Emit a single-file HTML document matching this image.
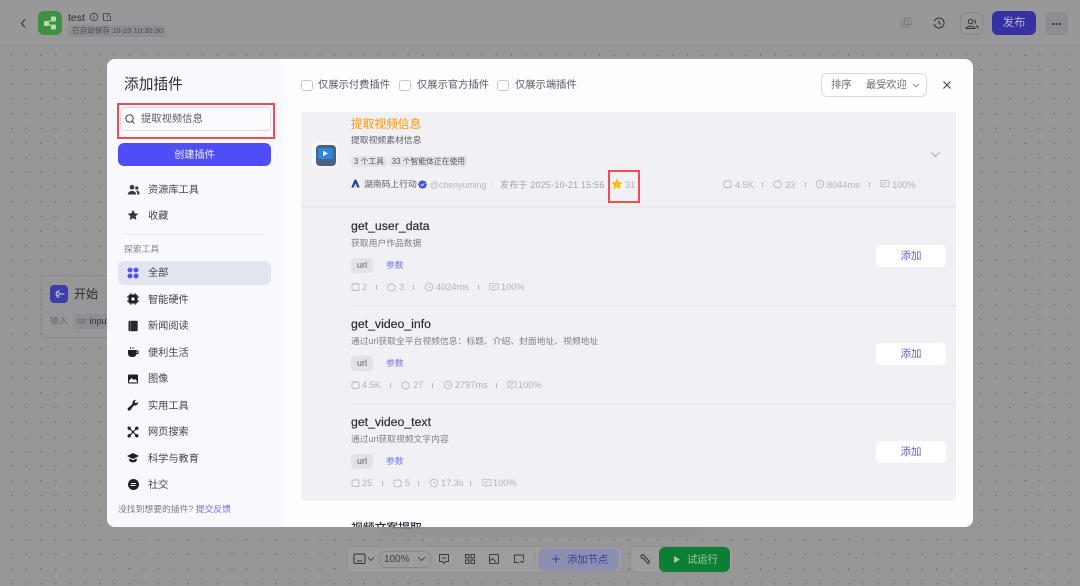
<!DOCTYPE html>
<html><head><meta charset="utf-8">
<style>
*{box-sizing:border-box;margin:0;padding:0}
html,body{width:1080px;height:586px;overflow:hidden}
body{position:relative;background-color:#979798;background-image:radial-gradient(#737375 0.7px,transparent 0.9px);background-size:14.7px 14.7px;background-position:4.35px 3.55px;font-family:"Liberation Sans","Noto Sans CJK SC",sans-serif;color:#33353f}
.a{position:absolute;white-space:nowrap}
svg{position:absolute;display:block}
.t{font-size:10.3px;line-height:14px}
.nav{font-size:10.2px;line-height:16px;color:#44464f;left:148px}
.g{color:#b2b3b9;font-size:9.2px;line-height:12px}
.name{left:351px;font-size:12.3px;line-height:16px;color:#26272e;font-weight:500;-webkit-text-stroke:.15px #26272e}
.desc{left:351px;font-size:8.8px;line-height:13px;color:#7d7f89}
.url{left:351px;width:22px;height:15px;border-radius:4px;background:#e2e2e7;font-size:9px;line-height:15px;text-align:center;color:#5f616b}
.par{left:386px;font-size:8.8px;line-height:14px;color:#7473ee}
.add{left:876px;width:70px;height:22px;border-radius:5px;background:#fff;color:#5f5ee8;font-size:10.5px;line-height:23px;text-align:center}
.sep{width:1px;height:5px;background:#b6b7bc}
</style></head><body>

<!-- header -->
<div class="a" style="left:0;top:0;width:1080px;height:46px;background:#98989a;border-bottom:1px solid #8e8e90"></div>
<svg style="left:19px;top:18px" width="9" height="11" viewBox="0 0 9 11"><path d="M6 1.5 2.5 5.5 6 9.5" fill="none" stroke="#2e2e33" stroke-width="1"/></svg>
<div class="a" style="left:38px;top:11px;width:24px;height:24px;border-radius:6px;background:#3f9141"></div>
<svg style="left:38px;top:11px" width="24" height="24" viewBox="0 0 24 24"><path d="M9 12 15 8M9 12 15 16" stroke="#a9cfa9" stroke-width="1.3"/><rect x="6" y="10" width="5" height="5" rx="1" fill="#b8d8b8"/><rect x="13" y="5.5" width="5" height="5" rx="1" fill="#b8d8b8"/><rect x="13" y="13.5" width="5" height="5" rx="1" fill="#b8d8b8"/></svg>
<div class="a" style="left:68px;top:11px;font-size:10.5px;line-height:14px;color:#2f2f35;font-weight:500">test</div>
<svg style="left:89px;top:12px" width="10" height="10" viewBox="0 0 10 10"><circle cx="5" cy="5" r="3.8" fill="none" stroke="#3c3c42" stroke-width=".8"/><path d="M5 4.4V7.2M5 2.8V3.6" stroke="#3c3c42" stroke-width=".8"/></svg>
<svg style="left:102px;top:12px" width="10" height="10" viewBox="0 0 10 10"><path d="M7 1.6H1.6V8.6H8.4V4M4.6 5.4 8.6 1.2" fill="none" stroke="#3c3c42" stroke-width=".8"/></svg>
<div class="a" style="left:68px;top:25px;width:98px;height:12px;border-radius:3px;background:#8d8d92;font-size:7.6px;line-height:12px;color:#4a4a50;padding-left:4px">已自动保存 10-23 10:30:30</div>

<svg style="left:901px;top:17px" width="11" height="11" viewBox="0 0 11 11"><rect x="1" y="3.5" width="6.5" height="6.5" rx="1" fill="none" stroke="#7c7c80"/><rect x="3.5" y="1" width="6.5" height="6.5" rx="1" fill="none" stroke="#7c7c80"/></svg>
<svg style="left:933px;top:17px" width="12" height="12" viewBox="0 0 12 12"><path d="M1.5 4A5 5 0 1 1 1.2 7M6 3.2V6.2L8 7.4" fill="none" stroke="#2f2f33" stroke-width="1"/></svg>
<div class="a" style="left:960px;top:12px;width:23px;height:23px;border-radius:6px;border:1px solid #88888c"></div>
<svg style="left:965px;top:18px" width="14" height="12" viewBox="0 0 14 12"><circle cx="5.5" cy="3.5" r="2.2" fill="none" stroke="#2f2f33"/><path d="M1 10.5C1 7.5 10 7.5 10 10.5ZM9 1.8A2 2 0 0 1 9.6 5.4M11 7.6C12.4 8 13 9 13 10.5" fill="none" stroke="#2f2f33"/></svg>
<div class="a" style="left:992px;top:11px;width:44px;height:24px;border-radius:6px;background:#3730a0;color:#b4b3d8;font-size:11.5px;line-height:25px;text-align:center">发布</div>
<div class="a" style="left:1045px;top:12px;width:23px;height:23px;border-radius:6px;background:#8c8c91"></div>
<div class="a" style="left:1052px;top:23px;width:2px;height:1.5px;background:#38383c;box-shadow:3.5px 0 #38383c,7px 0 #38383c"></div>

<!-- start node -->
<div class="a" style="left:41px;top:275px;width:90px;height:63px;border-radius:7px;background:#979799;border:1px solid #8a8a8d"></div>
<div class="a" style="left:50px;top:285px;width:18px;height:18px;border-radius:4px;background:#3d3fa6"></div>
<svg style="left:50px;top:285px" width="18" height="18" viewBox="0 0 18 18"><path d="M9.5 5.6A3.4 3.4 0 1 0 9.5 12.4" fill="none" stroke="#b9b9dd" stroke-width="1.1"/><circle cx="8" cy="9" r="1.5" fill="none" stroke="#b9b9dd"/><path d="M9.5 9H14.5" stroke="#b9b9dd" stroke-width="1.2"/></svg>
<div class="a" style="left:74px;top:286px;font-size:12px;line-height:16px;color:#2a2a2e">开始</div>
<div class="a" style="left:50px;top:315px;font-size:9px;line-height:13px;color:#6a6a6e">输入</div>
<div class="a" style="left:74px;top:314px;width:40px;height:15px;background:#8f8f93;border-radius:3px;font-size:9px;line-height:15px;padding-left:3px;color:#2d2d30"><span style="color:#68686c">str</span> input</div>

<!-- bottom toolbar -->
<div class="a" style="left:379px;top:520px;width:323px;height:17px;border-radius:0 0 8px 8px;background:#949497"></div>
<div class="a" style="left:392px;top:519px;font-size:9.5px;line-height:14px;color:#5f5f63">数据库</div>
<div class="a" style="left:347px;top:546px;width:276px;height:27px;border-radius:7px;background:#9d9da0;border:1px solid #909094"></div>
<svg style="left:353px;top:553px" width="14" height="12" viewBox="0 0 14 12"><rect x="1" y="1" width="11" height="9.5" rx="1.2" fill="none" stroke="#2f2f33" stroke-width="1"/><path d="M4 8H9" stroke="#2f2f33"/></svg>
<svg style="left:367px;top:556px" width="8" height="6" viewBox="0 0 8 6"><path d="M1 1.5 4 4.5 7 1.5" fill="none" stroke="#2f2f33" stroke-width=".8"/></svg>
<div class="a" style="left:379px;top:551px;width:52px;height:17px;border-radius:7px;border:1px solid #88888c;font-size:10px;line-height:15px;padding-left:4px;color:#3e3e44">100%</div>
<svg style="left:417px;top:556px" width="9" height="6" viewBox="0 0 9 6"><path d="M1 1 4.5 4.5 8 1" fill="none" stroke="#3a3a3f" stroke-width=".8"/></svg>
<svg style="left:438px;top:553px" width="12" height="12" viewBox="0 0 12 12"><path d="M1.5 1.5H10.5V8.5H7.5L6 10.5 4.5 8.5H1.5ZM4 5H8" fill="none" stroke="#3a3a3f"/></svg>
<svg style="left:464px;top:553px" width="12" height="12" viewBox="0 0 12 12"><path d="M1.5 1.5H5V5H1.5ZM7 1.5H10.5V5H7ZM1.5 7H5V10.5H1.5ZM7 7H10.5V10.5H7Z" fill="none" stroke="#3a3a3f"/></svg>
<svg style="left:488px;top:553px" width="12" height="12" viewBox="0 0 12 12"><rect x="1.5" y="1.5" width="9" height="9" rx="1" fill="none" stroke="#3a3a3f"/><path d="M1.5 8 4.5 5.5 8 9" fill="none" stroke="#3a3a3f"/></svg>
<svg style="left:513px;top:553px" width="12" height="12" viewBox="0 0 12 12"><path d="M6 9.5H1.5V2H10.5V6.5M7.5 8 9 9.5 11 7.5" fill="none" stroke="#3a3a3f"/></svg>
<div class="a" style="left:534px;top:552px;width:1px;height:13px;background:#8d8d91"></div>
<div class="a" style="left:539px;top:548px;width:80px;height:23px;border-radius:6px;background:#8d8fb0"></div>
<svg style="left:551px;top:554px" width="10" height="10" viewBox="0 0 10 10"><path d="M5 1V9M1 5H9" stroke="#3a3b9c" stroke-width="1"/></svg>
<div class="a" style="left:567px;top:553px;font-size:10.3px;line-height:15px;color:#3a3b9c">添加节点</div>
<div class="a" style="left:630px;top:546px;width:104px;height:27px;border-radius:7px;background:#9d9da0;border:1px solid #909094"></div>
<svg style="left:639px;top:553px" width="12" height="12" viewBox="0 0 12 12"><path d="M2 2.5 4 1.5 6 3.5 10.5 8.5 9 10.5 4.5 5.5 2.5 5Z" fill="none" stroke="#333337" stroke-width="1"/></svg>
<div class="a" style="left:659px;top:547px;width:71px;height:25px;border-radius:6px;background:#0c7f35"></div>
<svg style="left:673px;top:555px" width="8" height="9" viewBox="0 0 8 9"><path d="M1 1 7 4.5 1 8Z" fill="#a5c8ae"/></svg>
<div class="a" style="left:687px;top:553px;font-size:10.3px;line-height:15px;color:#a5c8ae">试运行</div>

<!-- modal -->
<div class="a" style="left:107px;top:59px;width:866px;height:468px;border-radius:8px;background:#fdfdff;overflow:hidden">
  <div class="a" style="left:0;top:0;width:176px;height:468px;background:#f8f8fd"></div>
</div>

<!-- sidebar -->
<div class="a" style="left:124px;top:75px;font-size:14.7px;line-height:21px;color:#2c2d33">添加插件</div>
<div class="a" style="left:120px;top:107px;width:151px;height:24px;border-radius:5px;background:#fbfbfe;border:1px solid #d8d9e3"></div>
<svg style="left:124px;top:113px" width="12" height="12" viewBox="0 0 12 12"><circle cx="5.5" cy="5.5" r="3.7" fill="none" stroke="#3c3d45" stroke-width="1"/><path d="M8.3 8.3 10.5 10.5" stroke="#3c3d45"/></svg>
<div class="a" style="left:141px;top:112px;font-size:10.3px;line-height:16px;color:#585a63">提取视频信息</div>
<div class="a" style="left:117px;top:102.5px;width:158px;height:36px;border:2.5px solid #f44b52"></div>
<div class="a" style="left:118px;top:143px;width:153px;height:23px;border-radius:6px;background:#4f4df5;color:#eeeefe;font-size:10.2px;line-height:25px;text-align:center">创建插件</div>

<svg style="left:127px;top:184px" width="13" height="12" viewBox="0 0 13 12"><circle cx="5" cy="3.2" r="2.3" fill="#333648"/><path d="M.8 10.5C.8 5.8 9.2 5.8 9.2 10.5Z" fill="#333648"/><circle cx="9.8" cy="4" r="1.6" fill="#333648"/><path d="M10 6.5C11.5 6.5 12.6 8 12.6 10.5H10.3C10.3 9 10 7.5 9 7Z" fill="#333648"/></svg>
<div class="a nav" style="top:183px">资源库工具</div>
<svg style="left:127px;top:209px" width="12" height="12" viewBox="0 0 12 12"><path d="M6 .8 7.6 4.2 11.4 4.7 8.6 7.2 9.4 11 6 9.1 2.6 11 3.4 7.2.6 4.7 4.4 4.2Z" fill="#333648"/></svg>
<div class="a nav" style="top:209px">收藏</div>
<div class="a" style="left:124px;top:234px;width:141px;height:1px;background:#eeeef4"></div>
<div class="a" style="left:124px;top:242px;font-size:8.8px;line-height:14px;color:#85868f">探索工具</div>
<div class="a" style="left:118px;top:261px;width:153px;height:23.5px;border-radius:6px;background:#e2e4ef"></div>
<svg style="left:127px;top:267px" width="12" height="12" viewBox="0 0 12 12"><g fill="#4f55f0"><ellipse cx="3" cy="3" rx="2.5" ry="2.4"/><ellipse cx="9" cy="3" rx="2.5" ry="2.4"/><ellipse cx="3" cy="9" rx="2.5" ry="2.4"/><ellipse cx="9" cy="9" rx="2.5" ry="2.4"/></g></svg>
<div class="a nav" style="top:266px">全部</div>
<svg style="left:127px;top:293px" width="12" height="12" viewBox="0 0 12 12"><rect x="1.5" y="1.5" width="9" height="9" rx="1.5" fill="#1f2027"/><path d="M4 0V12M8 0V12M0 4H12M0 8H12" stroke="#1f2027" stroke-width=".9"/><rect x="4.5" y="4.5" width="3" height="3" fill="#f8f8fd"/></svg>
<div class="a nav" style="top:293px">智能硬件</div>
<svg style="left:127px;top:320px" width="12" height="12" viewBox="0 0 12 12"><rect x="1.5" y=".8" width="9.2" height="10.4" rx="1" fill="#272830"/><path d="M3.4 1V11" stroke="#8a8b92" stroke-width=".6"/></svg>
<div class="a nav" style="top:319px">新闻阅读</div>
<svg style="left:127px;top:346px" width="12" height="12" viewBox="0 0 12 12"><path d="M1 4H9.5V7.5A3.5 3.5 0 0 1 6 11H4.5A3.5 3.5 0 0 1 1 7.5Z" fill="#1f2027"/><path d="M9.5 5H11V7.5H9.3" fill="none" stroke="#1f2027"/><path d="M3.5 1V3M6 1V3" stroke="#1f2027" stroke-width=".8"/></svg>
<div class="a nav" style="top:346px">便利生活</div>
<svg style="left:127px;top:373px" width="12" height="12" viewBox="0 0 12 12"><rect x="1" y="1.5" width="10" height="9" rx="1" fill="#1f2027"/><path d="M2 8 4.5 5 6.5 7 8 6 10 8V9.4H2Z" fill="#f8f8fd"/></svg>
<div class="a nav" style="top:372px">图像</div>
<svg style="left:127px;top:399px" width="12" height="12" viewBox="0 0 12 12"><path d="M11 3A3 3 0 0 1 7 6.3L3.4 11A1.5 1.5 0 0 1 1 9L5.6 5A3 3 0 0 1 9 1L7.4 2.8 8.8 4.4Z" fill="#1f2027"/></svg>
<div class="a nav" style="top:399px">实用工具</div>
<svg style="left:127px;top:426px" width="12" height="12" viewBox="0 0 12 12"><path d="M2.5 2.5 9.5 9.5M9.5 2.5 2.5 9.5" stroke="#1f2027" stroke-width="1.2"/><g fill="#1f2027"><circle cx="2.2" cy="2.2" r="1.7"/><circle cx="9.8" cy="2.2" r="1.7"/><circle cx="2.2" cy="9.8" r="1.7"/><circle cx="9.8" cy="9.8" r="1.7"/></g></svg>
<div class="a nav" style="top:425px">网页搜索</div>
<svg style="left:127px;top:452px" width="12" height="12" viewBox="0 0 12 12"><path d="M6 1 12 4 6 7 0 4Z" fill="#1f2027"/><path d="M2.3 6.3V8.6C3.5 11 8.5 11 9.7 8.6V6.3L6 8.2Z" fill="#1f2027"/></svg>
<div class="a nav" style="top:452px">科学与教育</div>
<div class="a" style="left:127.5px;top:478.5px;width:11px;height:11px;border-radius:50%;background:#1f2027"></div>
<div class="a" style="left:130.5px;top:482.5px;width:5px;height:1px;background:#f8f8fd;box-shadow:-.5px 2px #f8f8fd"></div>
<div class="a nav" style="top:478px">社交</div>
<div class="a" style="left:118px;top:502px;font-size:8.8px;line-height:14px;color:#7c7d86">没找到想要的插件? <span style="color:#6f6ef0">提交反馈</span></div>

<!-- filters -->
<div class="a" style="left:301px;top:79.5px;width:11.5px;height:11.5px;border-radius:3px;border:1px solid #c5c6d2;background:#fff"></div>
<div class="a t" style="left:318px;top:79px;color:#585a64">仅展示付费插件</div>
<div class="a" style="left:399px;top:79.5px;width:11.5px;height:11.5px;border-radius:3px;border:1px solid #c5c6d2;background:#fff"></div>
<div class="a t" style="left:417px;top:79px;color:#585a64">仅展示官方插件</div>
<div class="a" style="left:497px;top:79.5px;width:11.5px;height:11.5px;border-radius:3px;border:1px solid #c5c6d2;background:#fff"></div>
<div class="a t" style="left:515px;top:79px;color:#585a64">仅展示端插件</div>

<div class="a" style="left:821px;top:73px;width:106px;height:24px;border-radius:6px;border:1px solid #d9d9e6;background:#fff"></div>
<div class="a t" style="left:831px;top:79px;color:#6a6b75">排序</div>
<div class="a t" style="left:866px;top:79px;font-size:10.2px;color:#6a6b75">最受欢迎</div>
<svg style="left:912px;top:83px" width="8" height="6" viewBox="0 0 8 6"><path d="M1 1 4 4 7 1" fill="none" stroke="#8a8b95" stroke-width=".9"/></svg>
<svg style="left:942px;top:80px" width="10" height="10" viewBox="0 0 10 10"><path d="M1.5 1.5 8.5 8.5M8.5 1.5 1.5 8.5" stroke="#3b3c45" stroke-width="1"/></svg>

<!-- list card -->
<div class="a" style="left:301px;top:112px;width:655px;height:389px;border-radius:0 0 6px 6px;background:#f0f0f5"></div>
<div class="a" style="left:301px;top:206px;width:655px;height:2px;background:#e9e9ee"></div>
<div class="a" style="left:351px;top:305px;width:605px;height:1px;background:#e4e4e9"></div>
<div class="a" style="left:351px;top:403px;width:605px;height:1px;background:#e4e4e9"></div>

<!-- plugin head -->
<div class="a" style="left:312px;top:142px;width:26px;height:26px;border-radius:6px;background:#f8f8fb"></div>
<div class="a" style="left:316px;top:145px;width:20px;height:21px;border-radius:4px;background:#4b6286"></div>
<div class="a" style="left:318px;top:148px;width:15px;height:11px;border-radius:2px;background:#3085dc"></div>
<svg style="left:322px;top:150px" width="7" height="7" viewBox="0 0 7 7"><path d="M1 .8 6 3.5 1 6.2Z" fill="#fff"/></svg>
<div class="a" style="left:351px;top:116px;font-size:11.7px;line-height:18px;color:#f7a530;font-weight:500">提取视频信息</div>
<div class="a desc" style="top:134px;color:#5c5e68">提取视频素材信息</div>
<div class="a" style="left:351px;top:156px;width:36px;height:11px;border-radius:3px;background:#e4e4ea;font-size:7.8px;line-height:11.5px;text-align:center;color:#55565f">3 个工具</div>
<div class="a" style="left:390px;top:156px;width:77px;height:11px;border-radius:3px;background:#e4e4ea;font-size:7.8px;line-height:11.5px;text-align:center;color:#55565f">33 个智能体正在使用</div>
<svg style="left:351px;top:179px" width="9" height="9" viewBox="0 0 9 9"><path d="M.3 8.5 3.6.6H5.4L8.7 8.5H6.4L4.5 4.2 2.6 8.5Z" fill="#1f3f9a"/><path d="M3.6 8.5 4.5 6 5.4 8.5Z" fill="#f0b429"/></svg>
<div class="a" style="left:364px;top:178px;font-size:8.8px;line-height:13px;color:#5e606a">湖南码上行动</div>
<svg style="left:418px;top:179.5px" width="9" height="9" viewBox="0 0 9 9"><path d="M4.5 0 5.8 1 7.5 1 8 2.7 9 4.5 8 6.2 7.5 8 5.8 8 4.5 9 3.2 8 1.5 8 1 6.2 0 4.5 1 2.7 1.5 1 3.2 1Z" fill="#4e55dd"/><path d="M2.8 4.5 4.1 5.7 6.3 3.4" fill="none" stroke="#fff" stroke-width=".8"/></svg>
<div class="a g" style="left:430px;top:179px;font-size:8.8px;color:#b7b8c0">@chenyuming</div>
<div class="a" style="left:492px;top:180px;width:1px;height:8px;background:#e2e2e8"></div>
<div class="a g" style="left:500px;top:179px;font-size:9px;color:#a3a4ac;letter-spacing:.2px">发布于 2025-10-21 15:56</div>
<svg style="left:611px;top:178px" width="12" height="12" viewBox="0 0 12 12"><path d="M6 .5 7.7 4 11.6 4.5 8.8 7.2 9.5 11.2 6 9.3 2.5 11.2 3.2 7.2.4 4.5 4.3 4Z" fill="#f8bd12"/></svg>
<div class="a g" style="left:625px;top:179px">31</div>
<div class="a" style="left:607.5px;top:169.5px;width:32.5px;height:33.5px;border:2.5px solid #f44b52"></div>
<svg style="left:930px;top:151px" width="11" height="8" viewBox="0 0 11 8"><path d="M1.5 1.5 5.5 5.5 9.5 1.5" fill="none" stroke="#a5a6ae" stroke-width="1"/></svg>

<svg style="left:723px;top:179px" width="9" height="10" viewBox="0 0 9 10"><rect x="1" y="2" width="7" height="6.5" rx="1.5" fill="none" stroke="#b8b9bf" stroke-width=".9"/><path d="M3 .8V2M6 .8V2" stroke="#b8b9bf" stroke-width=".9"/></svg>
<div class="a g" style="left:735px;top:179px">4.5K</div><div class="a sep" style="left:762px;top:182px"></div>
<svg style="left:773px;top:180px" width="9" height="9" viewBox="0 0 9 9"><rect x=".8" y="1" width="7.4" height="6.8" rx="3" fill="none" stroke="#b8b9bf" stroke-width=".9"/></svg>
<div class="a g" style="left:785px;top:179px">33</div><div class="a sep" style="left:805px;top:182px"></div>
<svg style="left:815px;top:179px" width="10" height="10" viewBox="0 0 10 10"><circle cx="5" cy="5" r="3.8" fill="none" stroke="#b8b9bf" stroke-width=".9"/><path d="M5 3V5.2L6.4 5.8" fill="none" stroke="#b8b9bf" stroke-width=".8"/></svg>
<div class="a g" style="left:827px;top:179px">8044ms</div><div class="a sep" style="left:869px;top:182px"></div>
<svg style="left:880px;top:179px" width="10" height="10" viewBox="0 0 10 10"><path d="M.8 1.5H9V7.5H5.5L4.5 8.5 3.5 7.5H.8ZM2.8 3.8H6.8M2.8 5.4H5" fill="none" stroke="#b8b9bf" stroke-width=".8"/></svg>
<div class="a g" style="left:892px;top:179px">100%</div>

<!-- tool 1 -->
<div class="a name" style="top:218px">get_user_data</div>
<div class="a desc" style="top:237px">获取用户作品数据</div>
<div class="a url" style="top:258px">url</div><div class="a par" style="top:258px">参数</div>
<div class="a add" style="top:245px">添加</div>
<svg style="left:351px;top:282px" width="9" height="10" viewBox="0 0 9 10"><rect x="1" y="2" width="7" height="6.5" rx="1.5" fill="none" stroke="#b8b9bf" stroke-width=".9"/><path d="M3 .8V2M6 .8V2" stroke="#b8b9bf" stroke-width=".9"/></svg>
<div class="a g" style="left:362px;top:281px">2</div><div class="a sep" style="left:376px;top:285px"></div>
<svg style="left:387px;top:283px" width="9" height="9" viewBox="0 0 9 9"><rect x=".8" y="1" width="7.4" height="6.8" rx="3" fill="none" stroke="#b8b9bf" stroke-width=".9"/></svg>
<div class="a g" style="left:399px;top:281px">3</div><div class="a sep" style="left:413px;top:285px"></div>
<svg style="left:424px;top:282px" width="10" height="10" viewBox="0 0 10 10"><circle cx="5" cy="5" r="3.8" fill="none" stroke="#b8b9bf" stroke-width=".9"/><path d="M5 3V5.2L6.4 5.8" fill="none" stroke="#b8b9bf" stroke-width=".8"/></svg>
<div class="a g" style="left:436px;top:281px">4024ms</div><div class="a sep" style="left:478px;top:285px"></div>
<svg style="left:489px;top:282px" width="10" height="10" viewBox="0 0 10 10"><path d="M.8 1.5H9V7.5H5.5L4.5 8.5 3.5 7.5H.8ZM2.8 3.8H6.8M2.8 5.4H5" fill="none" stroke="#b8b9bf" stroke-width=".8"/></svg>
<div class="a g" style="left:501px;top:281px">100%</div>

<!-- tool 2 -->
<div class="a name" style="top:316px">get_video_info</div>
<div class="a desc" style="top:335px">通过url获取全平台视频信息：标题、介绍、封面地址、视频地址</div>
<div class="a url" style="top:356px">url</div><div class="a par" style="top:356px">参数</div>
<div class="a add" style="top:343px">添加</div>
<svg style="left:351px;top:380px" width="9" height="10" viewBox="0 0 9 10"><rect x="1" y="2" width="7" height="6.5" rx="1.5" fill="none" stroke="#b8b9bf" stroke-width=".9"/><path d="M3 .8V2M6 .8V2" stroke="#b8b9bf" stroke-width=".9"/></svg>
<div class="a g" style="left:362px;top:379px">4.5K</div><div class="a sep" style="left:390px;top:383px"></div>
<svg style="left:401px;top:381px" width="9" height="9" viewBox="0 0 9 9"><rect x=".8" y="1" width="7.4" height="6.8" rx="3" fill="none" stroke="#b8b9bf" stroke-width=".9"/></svg>
<div class="a g" style="left:413px;top:379px">27</div><div class="a sep" style="left:432px;top:383px"></div>
<svg style="left:443px;top:380px" width="10" height="10" viewBox="0 0 10 10"><circle cx="5" cy="5" r="3.8" fill="none" stroke="#b8b9bf" stroke-width=".9"/><path d="M5 3V5.2L6.4 5.8" fill="none" stroke="#b8b9bf" stroke-width=".8"/></svg>
<div class="a g" style="left:455px;top:379px">2797ms</div><div class="a sep" style="left:496px;top:383px"></div>
<svg style="left:507px;top:380px" width="10" height="10" viewBox="0 0 10 10"><path d="M.8 1.5H9V7.5H5.5L4.5 8.5 3.5 7.5H.8ZM2.8 3.8H6.8M2.8 5.4H5" fill="none" stroke="#b8b9bf" stroke-width=".8"/></svg>
<div class="a g" style="left:518px;top:379px">100%</div>

<!-- tool 3 -->
<div class="a name" style="top:414px">get_video_text</div>
<div class="a desc" style="top:433px">通过url获取视频文字内容</div>
<div class="a url" style="top:454px">url</div><div class="a par" style="top:454px">参数</div>
<div class="a add" style="top:441px">添加</div>
<svg style="left:351px;top:478px" width="9" height="10" viewBox="0 0 9 10"><rect x="1" y="2" width="7" height="6.5" rx="1.5" fill="none" stroke="#b8b9bf" stroke-width=".9"/><path d="M3 .8V2M6 .8V2" stroke="#b8b9bf" stroke-width=".9"/></svg>
<div class="a g" style="left:362px;top:477px">25</div><div class="a sep" style="left:382px;top:481px"></div>
<svg style="left:393px;top:479px" width="9" height="9" viewBox="0 0 9 9"><rect x=".8" y="1" width="7.4" height="6.8" rx="2" fill="none" stroke="#b8b9bf" stroke-width=".9"/></svg>
<div class="a g" style="left:405px;top:477px">5</div><div class="a sep" style="left:418px;top:481px"></div>
<svg style="left:429px;top:478px" width="10" height="10" viewBox="0 0 10 10"><circle cx="5" cy="5" r="3.8" fill="none" stroke="#b8b9bf" stroke-width=".9"/><path d="M5 3V5.2L6.4 5.8" fill="none" stroke="#b8b9bf" stroke-width=".8"/></svg>
<div class="a g" style="left:441px;top:477px">17.3s</div><div class="a sep" style="left:470px;top:481px"></div>
<svg style="left:482px;top:478px" width="10" height="10" viewBox="0 0 10 10"><path d="M.8 1.5H9V7.5H5.5L4.5 8.5 3.5 7.5H.8ZM2.8 3.8H6.8M2.8 5.4H5" fill="none" stroke="#b8b9bf" stroke-width=".8"/></svg>
<div class="a g" style="left:493px;top:477px">100%</div>

<!-- clipped next plugin title -->
<div class="a" style="left:351px;top:505px;width:200px;height:22px;overflow:hidden"><div class="a" style="left:0;top:15px;font-size:11.8px;line-height:17px;color:#26272e;font-weight:500">视频文案提取</div></div>

</body></html>
